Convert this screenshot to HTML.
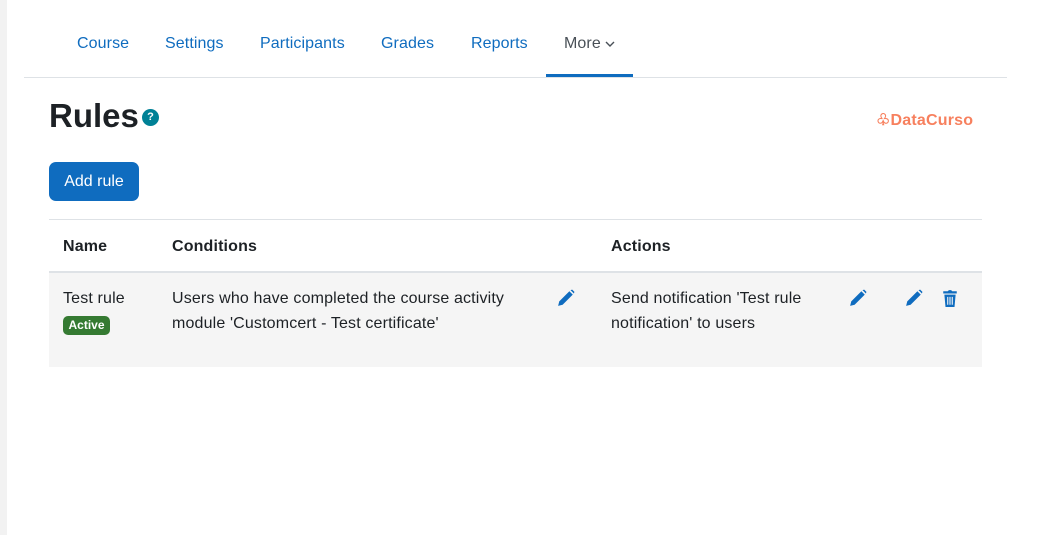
<!DOCTYPE html>
<html><head><style>
body{margin:0;width:1056px;height:535px;background:#fff;font-family:"Liberation Sans",sans-serif;color:#1d2125;position:relative;overflow:hidden}
.strip{position:absolute;left:0;top:0;width:7px;height:535px;background:#f2f2f2}
.nav{position:absolute;left:24px;top:0;width:983px;height:77px;border-bottom:1px solid #dee2e6}
.nav a{position:absolute;top:35px;font-size:16px;color:#0f6cbf;text-decoration:none;letter-spacing:0.1px}
.act{position:absolute;left:522px;top:74px;width:87px;height:3px;background:#0f6cbf}
h1{position:absolute;left:49px;top:96px;margin:0;font-size:33px;font-weight:bold;line-height:40px}
.q{position:absolute;left:142px;top:109px;width:17px;height:17px;border-radius:50%;background:#008196;color:#fff;font-size:11px;font-weight:bold;text-align:center;line-height:17px}
.dc{position:absolute;left:876px;top:110px;color:#f7805e;font-size:16px;font-weight:bold;letter-spacing:0.2px}
.btn{position:absolute;left:49px;top:162px;width:90px;height:39px;background:#0f6cbf;border-radius:7px;color:#fff;font-size:16px;line-height:39px;text-align:center}
.t{position:absolute;font-size:16px;line-height:25px;letter-spacing:0.15px}
.hl{position:absolute;left:49px;width:933px;background:#dee2e6}
.row{position:absolute;left:49px;top:273px;width:933px;height:94px;background:#f5f5f5}
.badge{position:absolute;left:63px;top:316px;width:47px;height:19px;background:#357a32;color:#fff;border-radius:5px;font-size:12px;font-weight:bold;text-align:center;line-height:19px}
svg{position:absolute}
</style></head><body>
<div class="strip"></div>
<div class="nav">
<a style="left:53px">Course</a><a style="left:141px">Settings</a><a style="left:236px">Participants</a><a style="left:357px">Grades</a><a style="left:447px">Reports</a><a style="left:540px;color:#495057">More</a>
<svg style="left:581px;top:40px" width="10" height="8" viewBox="0 0 10 8"><path d="M1 2l4 4 4-4" stroke="#495057" stroke-width="1.4" fill="none"/></svg>
<div class="act"></div></div>
<h1>Rules</h1><div class="q">?</div>
<div class="dc">♧DataCurso</div>
<div class="btn">Add rule</div>
<div class="hl" style="top:219px;height:1px"></div>
<div class="t" style="left:63px;top:234px;font-weight:bold">Name</div>
<div class="t" style="left:172px;top:234px;font-weight:bold">Conditions</div>
<div class="t" style="left:611px;top:234px;font-weight:bold">Actions</div>
<div class="hl" style="top:271px;height:2px"></div>
<div class="row"></div>
<div class="t" style="left:63px;top:286px">Test rule</div>
<div class="badge">Active</div>
<div class="t" style="left:172px;top:286px;width:370px">Users who have completed the course activity module 'Customcert - Test certificate'</div>
<div class="t" style="left:611px;top:286px;width:220px">Send notification 'Test rule notification' to users</div>
<svg style="left:557px;top:289px" width="18" height="18" viewBox="0 0 16 16"><path d="M1 15l1-4L11 2l3 3-9 9zM12 1l1.5-0.5 2 2L15 4z" fill="#0f6cbf"/></svg>
<svg style="left:849px;top:289px" width="18" height="18" viewBox="0 0 16 16"><path d="M1 15l1-4L11 2l3 3-9 9zM12 1l1.5-0.5 2 2L15 4z" fill="#0f6cbf"/></svg>
<svg style="left:905px;top:289px" width="18" height="18" viewBox="0 0 16 16"><path d="M1 15l1-4L11 2l3 3-9 9zM12 1l1.5-0.5 2 2L15 4z" fill="#0f6cbf"/></svg>
<svg style="left:942px;top:289px" width="16" height="18" viewBox="0 0 14 16"><path d="M1 2h4l1-1h2l1 1h4v2H1zM2 5h10l-1 11H3zM4.5 7v7h1V7zM6.5 7v7h1V7zM8.5 7v7h1V7z" fill="#0f6cbf" fill-rule="evenodd"/></svg>
</body></html>
